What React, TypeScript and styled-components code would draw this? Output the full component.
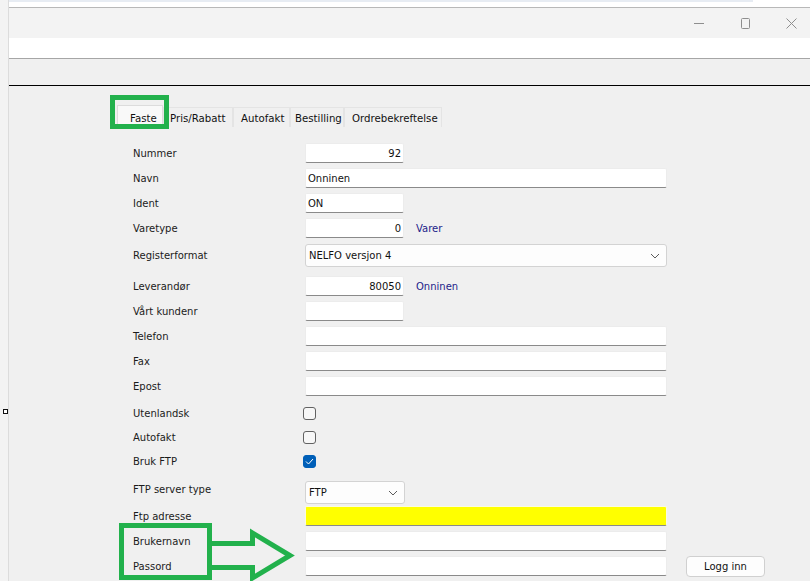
import React from "react";
import styled, { createGlobalStyle } from "styled-components";

const GlobalStyle = createGlobalStyle`
  html, body, #root { margin: 0; padding: 0; height: 100%; }
  body {
    font-family: "DejaVu Sans", "Liberation Sans", sans-serif;
    background: #f0f0f0;
    overflow: hidden;
  }
  * { box-sizing: border-box; }
`;

const Page = styled.div`
  position: relative;
  display: flex;
  width: 810px;
  height: 581px;
  overflow: hidden;
  background: #f0f0f0;
`;

const LeftStrip = styled.div`
  width: 9px;
  flex-shrink: 0;
  background: #f3f3f3;
  border-right: 1px solid #dcdcdc;
  padding-top: 409px;
`;

const ResizeMarker = styled.div`
  width: 5px;
  height: 5px;
  margin-left: 3px;
  border: 1px solid #111;
  background: #fff;
`;

const Window = styled.div`
  flex: 1;
  display: flex;
  flex-direction: column;
  min-width: 0;
`;

const TopEdge = styled.div`
  height: 8px;
  background: #ffffff;
  border-bottom: 1px solid #b8b8b8;
`;

const TopBand = styled.div`
  width: 744px;
  height: 2px;
  background: #e7ecf3;
`;

const TitleBar = styled.div`
  height: 30px;
  background: #f3f3f3;
  display: flex;
  justify-content: flex-end;
  align-items: center;
  margin-right: -4px;
`;

const ControlButton = styled.div`
  width: 46px;
  height: 30px;
  display: flex;
  align-items: center;
  justify-content: center;
  color: #8e8e8e;
`;

const WhiteStrip = styled.div`
  height: 21px;
  background: #ffffff;
  border-bottom: 1px solid #a6a6a6;
`;

const Toolbar = styled.div`
  height: 27px;
  background: #f0f0f0;
  border-bottom: 1px solid #000000;
`;

const Body = styled.div`
  flex: 1;
  background: #f0f0f0;
  padding-top: 19px;
`;

const TabStrip = styled.div`
  display: flex;
  align-items: flex-end;
  padding-left: 108px;
  height: 23px;
`;

const Tab = styled.div<{ $active?: boolean; $w: number; $pad: number }>`
  display: flex;
  align-items: center;
  width: ${(p) => p.$w}px;
  flex-shrink: 0;
  padding-top: 2px;
  padding-left: ${(p) => p.$pad}px;
  font-size: 10.2px;
  color: #111;
  background: ${(p) => (p.$active ? "#f9f9f9" : "#f0f0f0")};
  border: 1px solid ${(p) => (p.$active ? "#dcdcdc" : "#e4e4e4")};
  border-bottom: none;
  height: ${(p) => (p.$active ? "23px" : "20px")};
  margin-bottom: ${(p) => (p.$active ? "0" : "1px")};
  white-space: nowrap;
`;

const Form = styled.div`
  display: flex;
  flex-direction: column;
  padding-left: 124px;
  margin-top: 15px;
`;

const Row = styled.div<{ $h: number; $gap: number }>`
  display: flex;
  align-items: center;
  height: ${(p) => p.$h}px;
  margin-bottom: ${(p) => p.$gap}px;
`;

const Label = styled.div<{ $raise?: boolean }>`
  width: 172px;
  flex-shrink: 0;
  font-size: 10px;
  color: #1b1b1b;
  white-space: nowrap;
  margin-bottom: ${(p) => (p.$raise ? "7px" : "0")};
`;

const TextInput = styled.input<{ $w: number; $right?: boolean; $yellow?: boolean }>`
  width: ${(p) => p.$w}px;
  height: 20px;
  margin: 0;
  padding: 0 2px;
  font-family: "DejaVu Sans", "Liberation Sans", sans-serif;
  font-size: 10px;
  color: #111;
  text-align: ${(p) => (p.$right ? "right" : "left")};
  background: ${(p) => (p.$yellow ? "#ffff00" : "#ffffff")};
  border: 1px solid ${(p) => (p.$yellow ? "#fbfbe0" : "#ececec")};
  border-bottom: 1px solid #8a8a8a;
  border-radius: 2px;
  outline: none;
`;

const SelectBox = styled.div<{ $w: number }>`
  width: ${(p) => p.$w}px;
  height: 23px;
  display: flex;
  align-items: center;
  justify-content: space-between;
  padding: 0 6px 0 3px;
  font-size: 10px;
  color: #111;
  background: #fdfdfd;
  border: 1px solid #d3d3d3;
  border-radius: 3px;
`;

const Info = styled.span`
  margin-left: 12px;
  font-size: 10px;
  color: #1d1d8a;
`;

const Check = styled.div<{ $checked?: boolean }>`
  width: 13px;
  height: 13px;
  margin-left: -2px;
  border-radius: 3px;
  border: 1px solid ${(p) => (p.$checked ? "#005fb8" : "#626262")};
  background: ${(p) => (p.$checked ? "#005fb8" : "#f7f7f7")};
  display: flex;
  align-items: center;
  justify-content: center;
`;

const Button = styled.div`
  margin-left: 19px;
  width: 79px;
  height: 21px;
  display: flex;
  align-items: center;
  justify-content: center;
  font-size: 10px;
  color: #111;
  background: #fdfdfd;
  border: 1px solid #d0d0d0;
  border-radius: 4px;
`;

const Overlay = styled.svg`
  position: absolute;
  left: 0;
  top: 0;
  width: 810px;
  height: 581px;
  pointer-events: none;
`;

const Chevron = () => (
  <svg width="10" height="6" viewBox="0 0 10 6">
    <path d="M1 1 L5 5 L9 1" fill="none" stroke="#5c5c5c" strokeWidth="1" />
  </svg>
);

type InputRow = { label: string; w: number; value?: string; right?: boolean; info?: string; gap: number };

const tabs = [
  { label: "Faste", w: 46, pad: 12, active: true },
  { label: "Pris/Rabatt", w: 70, pad: 6 },
  { label: "Autofakt", w: 57, pad: 7 },
  { label: "Bestilling", w: 54, pad: 4 },
  { label: "Ordrebekreftelse", w: 98, pad: 7 },
];

const topRows: InputRow[] = [
  { label: "Nummer", w: 99, value: "92", right: true, gap: 5 },
  { label: "Navn", w: 362, value: "Onninen", gap: 5 },
  { label: "Ident", w: 99, value: "ON", gap: 5 },
  { label: "Varetype", w: 99, value: "0", right: true, info: "Varer", gap: 6 },
];

const midRows: InputRow[] = [
  { label: "Leverandør", w: 99, value: "80050", right: true, info: "Onninen", gap: 5 },
  { label: "Vårt kundenr", w: 99, gap: 5 },
  { label: "Telefon", w: 362, gap: 5 },
  { label: "Fax", w: 362, gap: 5 },
  { label: "Epost", w: 362, gap: 11 },
];

const checks = [
  { label: "Utenlandsk", checked: false, gap: 11 },
  { label: "Autofakt", checked: false, gap: 11 },
  { label: "Bruk FTP", checked: true, gap: 13 },
];

const renderInputRow = (r: InputRow) => (
  <Row key={r.label} $h={20} $gap={r.gap}>
    <Label>{r.label}</Label>
    <TextInput $w={r.w} $right={r.right} readOnly value={r.value ?? ""} />
    {r.info && <Info>{r.info}</Info>}
  </Row>
);

export default function App() {
  return (
    <>
      <GlobalStyle />
      <Page>
        <LeftStrip>
          <ResizeMarker />
        </LeftStrip>
        <Window>
          <TopEdge>
            <TopBand />
          </TopEdge>
          <TitleBar>
            <ControlButton>
              <svg width="10" height="10" viewBox="0 0 10 10">
                <path d="M0 5.5 H10" stroke="currentColor" strokeWidth="1" />
              </svg>
            </ControlButton>
            <ControlButton>
              <svg width="11" height="11" viewBox="0 0 11 11">
                <rect x="1.5" y="0.5" width="8" height="10" rx="1" fill="none" stroke="currentColor" strokeWidth="1" />
              </svg>
            </ControlButton>
            <ControlButton>
              <svg width="11" height="11" viewBox="0 0 11 11">
                <path d="M0.5 0.5 L10.5 10.5 M10.5 0.5 L0.5 10.5" stroke="currentColor" strokeWidth="1" />
              </svg>
            </ControlButton>
          </TitleBar>
          <WhiteStrip />
          <Toolbar />
          <Body>
            <TabStrip>
              {tabs.map((t) => (
                <Tab key={t.label} $active={t.active} $w={t.w} $pad={t.pad}>
                  {t.label}
                </Tab>
              ))}
            </TabStrip>
            <Form>
              {topRows.map(renderInputRow)}
              <Row $h={23} $gap={9}>
                <Label>Registerformat</Label>
                <SelectBox $w={362}>
                  <span>NELFO versjon 4</span>
                  <Chevron />
                </SelectBox>
              </Row>
              {midRows.map(renderInputRow)}
              {checks.map((c) => (
                <Row key={c.label} $h={13} $gap={c.gap}>
                  <Label>{c.label}</Label>
                  <Check $checked={c.checked}>
                    {c.checked && (
                      <svg width="9" height="7" viewBox="0 0 9 7">
                        <path d="M1 3.5 L3.5 6 L8 1" fill="none" stroke="#fff" strokeWidth="1" />
                      </svg>
                    )}
                  </Check>
                </Row>
              ))}
              <Row $h={23} $gap={2}>
                <Label $raise>FTP server type</Label>
                <SelectBox $w={100}>
                  <span>FTP</span>
                  <Chevron />
                </SelectBox>
              </Row>
              <Row $h={20} $gap={5}>
                <Label>Ftp adresse</Label>
                <TextInput $w={362} $yellow readOnly value="" />
              </Row>
              <Row $h={20} $gap={5}>
                <Label>Brukernavn</Label>
                <TextInput $w={362} readOnly value="" />
              </Row>
              <Row $h={20} $gap={5}>
                <Label>Passord</Label>
                <TextInput $w={362} readOnly value="" />
                <Button>Logg inn</Button>
              </Row>
            </Form>
          </Body>
        </Window>
        <Overlay viewBox="0 0 810 581">
          <rect x="112.5" y="97.5" width="54" height="29" fill="none" stroke="#22b14c" strokeWidth="5" />
          <rect x="121.5" y="525.5" width="88" height="52" fill="none" stroke="#22b14c" strokeWidth="5" />
          <polyline
            points="210,543.5 252.5,543.5 252.5,533 290,555.5 252.5,578 252.5,567.5 210,567.5"
            fill="none"
            stroke="#22b14c"
            strokeWidth="5"
            strokeLinejoin="miter"
          />
        </Overlay>
      </Page>
    </>
  );
}
